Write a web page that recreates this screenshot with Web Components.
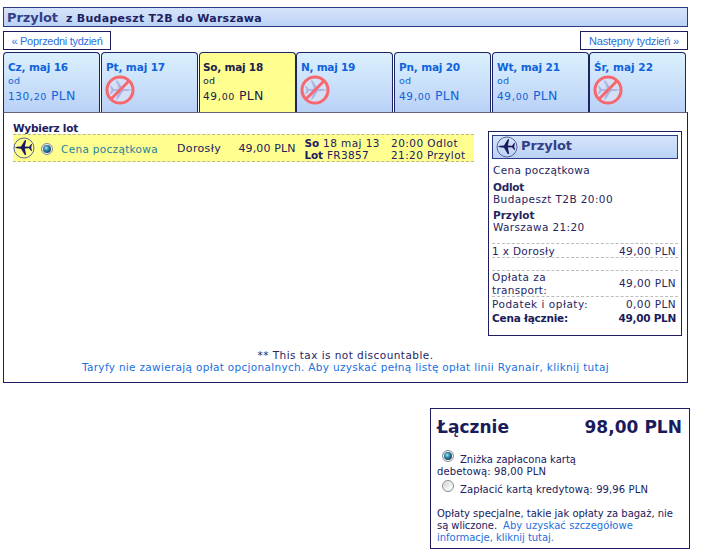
<!DOCTYPE html>
<html lang="pl">
<head>
<meta charset="utf-8">
<title>Wybierz lot</title>
<style>
  body {
    margin: 0;
    width: 703px;
    height: 557px;
    overflow: hidden;
    background: #fff;
    color: #20205e;
    font: 10.5px/12px Verdana, "DejaVu Sans", sans-serif;
  }
</style>
</head>
<body>
<booking-page></booking-page>

<script>
// Single line of text tracked out (or in) to a given width
class FitText extends HTMLElement {
  constructor() {
    super()
    this.attachShadow({ mode: 'open' })
    this.shadowRoot.innerHTML = `
      <style>
        :host { display: inline-block; width: max-content; white-space: nowrap; }
        :host([bold]) { font-weight: bold; }
      </style>
      <slot></slot>
    `
  }

  connectedCallback() {
    queueMicrotask(() => this.fit())
  }

  fit() {
    const w = Number(this.getAttribute('w'))
    const n = this.textContent.length
    if (!w || !n) return
    this.style.letterSpacing = `${(w - this.getBoundingClientRect().width) / n}px`
    this.style.width = `${w}px`
  }
}

class PlaneIcon extends HTMLElement {
  constructor() {
    super()
    this.attachShadow({ mode: 'open' })
    this.shadowRoot.innerHTML = `
      <style>
        :host { display: block; width: 22px; height: 22px; flex: none; }
        svg { display: block; }
      </style>
      <svg width="22" height="22" viewBox="0 0 22 22">
        <circle cx="11" cy="11" r="10" fill="none" stroke="#4a5390" stroke-width=".9"/>
        <path fill="#1b1b5c" d="M2 10.5 Q3.2 9.5 8 9.4 L11.8 3.2 L13.2 3.2 L11.9 9.5 L16 9.8 L18.2 7 L19 7 L18.2 10.5 L19 14 L18.2 14 L16 11.3 L11.9 11.6 L13.2 17.9 L11.8 17.9 L8 11.7 Q3.2 11.6 2 10.5z"/>
      </svg>
    `
  }
}

class NoFlightIcon extends HTMLElement {
  constructor() {
    super()
    this.attachShadow({ mode: 'open' })
    this.shadowRoot.innerHTML = `
      <style>
        :host { display: block; width: 30px; height: 30px; }
        svg { display: block; }
      </style>
      <svg width="30" height="30" viewBox="0 0 30 30">
        <circle cx="15" cy="15" r="13" fill="#d3e1f8"/>
        <path fill="#abb4e2" d="M26.5 15 Q25 14 18 13.8 L12.5 5.5 L10.8 5.5 L14 13.8 L9 14.2 L6.5 11 L5 11 L6.5 15 L5 19 L6.5 19 L9 15.8 L14 16.2 L10.8 24.5 L12.5 24.5 L18 16.2 Q25 16 26.5 15z"/>
        <circle cx="15" cy="15" r="13" fill="none" stroke="#f7686e" stroke-width="3"/>
        <path d="M5.8 24.2 L24.2 5.8" stroke="#f7686e" stroke-width="3"/>
      </svg>
    `
  }
}

class RadioDot extends HTMLElement {
  constructor() {
    super()
    this.attachShadow({ mode: 'open' })
    this.shadowRoot.innerHTML = `
      <style>
        :host {
          display: grid;
          place-items: center;
          box-sizing: border-box;
          width: 12px;
          height: 12px;
          flex: none;
          border: 1px solid #858b8f;
          border-radius: 50%;
          background: linear-gradient(135deg, #c5c9cc, #f8f8f8 70%);
          box-shadow: inset 0 0 0 1px #f4f4f4;
        }
        i { display: none; width: 8px; height: 8px; border-radius: 50%; background: radial-gradient(circle at 40% 38%, #a8e4f4 0, #2f81a5 38%, #12384f 80%); }
        :host([checked]) i { display: block; }
      </style>
      <i></i>
    `
  }
}

class TitleBar extends HTMLElement {
  constructor() {
    super()
    this.attachShadow({ mode: 'open' })
    this.shadowRoot.innerHTML = `
      <style>
        :host {
          display: flex;
          box-sizing: border-box;
          border: 1px solid #2b3a82;
          background: linear-gradient(#d5e4fa, #cbdcf8 45%, #bad2f6);
        }
      </style>
      <slot></slot>
    `
  }
}

class WeekButton extends HTMLElement {
  constructor() {
    super()
    this.attachShadow({ mode: 'open' })
    this.shadowRoot.innerHTML = `
      <style>
        :host {
          display: flex;
          justify-content: center;
          box-sizing: border-box;
          width: 108px;
          height: 19px;
          border: 1px solid #1d1d5f;
          color: #2a6fdc;
          font: 11px/19px "Liberation Sans", Arial, sans-serif;
        }
      </style>
      <slot></slot>
    `
  }
}

class DayTab extends HTMLElement {
  connectedCallback() {
    if (this.shadowRoot) return
    this.attachShadow({ mode: 'open' })
    const whole = this.getAttribute('whole')
    const body = whole
      ? `<div class="from"><fit-text w="12">od</fit-text></div>
         <div class="price"><fit-text w="${this.getAttribute('price-w')}">${whole},<small>${this.getAttribute('cents')}</small></fit-text><fit-text class="cur" w="24.5">PLN</fit-text></div>`
      : '<no-flight-icon></no-flight-icon>'
    this.shadowRoot.innerHTML = `
      <style>
        :host {
          display: block;
          box-sizing: border-box;
          width: 97px;
          height: 60px;
          padding: 8px 0 0 4px;
          border: 1px solid #1d2464;
          border-bottom: 0;
          border-radius: 4px 4px 0 0;
          background: linear-gradient(#daf0fd, #cbe1fa 50%, #b9d1f6);
          color: #0f63dc;
        }
        :host([selected]) { padding-left: 3px; background: #ffff90; color: #20204e; }
        .from { font-size: 9.5px; height: 14px; line-height: 15px; }
        .price { display: flex; gap: 4px; align-items: baseline; font-size: 10.5px; line-height: 18px; }
        .cur { font-size: 12.5px; }
        small { font-size: 9.5px; }
        no-flight-icon { margin: 2px 0 0 -1px; }
      </style>
      <fit-text bold w="${this.getAttribute('w')}">${this.getAttribute('day')}</fit-text>
      ${body}
    `
  }
}

class FlightRow extends HTMLElement {
  constructor() {
    super()
    this.attachShadow({ mode: 'open' })
    this.shadowRoot.innerHTML = `
      <style>
        :host {
          display: flex;
          align-items: center;
          box-sizing: border-box;
          width: 461px;
          height: 28px;
          background: #ffff90;
          border: dashed #b9b98a;
          border-width: 1px 0;
        }
        radio-dot { margin: 2px 8px 0 6px; }
        .fare { color: #267f9e; width: 116px; padding-top: 1px; }
        .who { width: 61.5px; font-size: 11px; padding-top: 1px; }
        .sum { width: 66px; font-size: 11px; padding-top: 1px; }
        .date { width: 86.5px; }
        .line { display: flex; gap: 4px; }
        .times, .date { padding-top: 1px; line-height: 12px; }
      </style>
      <plane-icon></plane-icon>
      <radio-dot checked></radio-dot>
      <div class="fare"><fit-text w="97">Cena początkowa</fit-text></div>
      <div class="who"><fit-text w="44">Dorosły</fit-text></div>
      <div class="sum"><fit-text w="57">49,00 PLN</fit-text></div>
      <div class="date">
        <div class="line"><fit-text bold w="14.5">So</fit-text><fit-text w="57">18 maj 13</fit-text></div>
        <div class="line"><fit-text bold w="18.5">Lot</fit-text><fit-text w="42">FR3857</fit-text></div>
      </div>
      <div class="times">
        <div><fit-text w="67">20:00 Odlot</fit-text></div>
        <div><fit-text w="74.5">21:20 Przylot</fit-text></div>
      </div>
    `
  }
}

class FlightSummary extends HTMLElement {
  constructor() {
    super()
    this.attachShadow({ mode: 'open' })
    this.shadowRoot.innerHTML = `
      <style>
        :host {
          display: block;
          box-sizing: border-box;
          width: 194px;
          height: 205px;
          padding: 3px;
          border: 1px solid #1d1d5f;
          color: #26265f;
        }
        title-bar { height: 24px; padding-left: 3px; gap: 3px; color: #333f86; font-size: 13px; line-height: 20px; }
        p { margin: 0 0 0 1px; }
        p fit-text { display: block; }
        .fare { padding-top: 5px; }
        .leg { padding-top: 5px; }
        .leg + .leg { padding-top: 4px; }
        .row {
          display: flex;
          justify-content: space-between;
          align-items: center;
          box-sizing: border-box;
          padding-right: 2px;
          border-top: 1px dashed #bdbdbd;
        }
        .row fit-text { display: block; }
        .plain { border-top: 0; }
        .first { margin-top: 10px; height: 14px; }
        .gap { height: 13px; }
        .fee { height: 26px; line-height: 13px; }
        .tax { height: 15px; }
        .total { height: 14px; color: #1b1b5c; }
      </style>
      <title-bar><plane-icon></plane-icon><fit-text bold w="51">Przylot</fit-text></title-bar>
      <p class="fare"><fit-text w="97">Cena początkowa</fit-text></p>
      <p class="leg"><fit-text bold w="31">Odlot</fit-text><fit-text w="120">Budapeszt T2B 20:00</fit-text></p>
      <p class="leg"><fit-text bold w="41.5">Przylot</fit-text><fit-text w="91.5">Warszawa 21:20</fit-text></p>
      <div class="row first"><fit-text w="63">1 x Dorosły</fit-text><fit-text w="57">49,00 PLN</fit-text></div>
      <div class="row gap"></div>
      <div class="row fee"><div><fit-text w="54">Opłata za</fit-text><fit-text w="55">transport:</fit-text></div><fit-text w="57">49,00 PLN</fit-text></div>
      <div class="row tax"><fit-text w="96">Podatek i opłaty:</fit-text><fit-text w="50">0,00 PLN</fit-text></div>
      <div class="row plain total"><fit-text bold w="76">Cena łącznie:</fit-text><fit-text bold w="57.5">49,00 PLN</fit-text></div>
    `
  }
}

class PaymentTotal extends HTMLElement {
  constructor() {
    super()
    this.attachShadow({ mode: 'open' })
    this.shadowRoot.innerHTML = `
      <style>
        :host {
          display: block;
          box-sizing: border-box;
          width: 260px;
          height: 141px;
          padding: 7px 7px 0 6px;
          border: 1px solid #1d1d5f;
          font-size: 10px;
        }
        .head { display: flex; justify-content: space-between; color: #1b1b5c; font-size: 17px; line-height: 22px; }
        .opt { display: flex; gap: 6px; padding-left: 5px; }
        .opt fit-text { margin-top: 4px; }
        .debit { padding-top: 12px; }
        .line { display: block; }
        .credit { padding-top: 2px; }
        .note { margin: 0; padding-top: 12px; }
        .pair { display: flex; gap: 6px; }
        .link { color: #1e6fdc; }
      </style>
      <div class="head"><fit-text bold w="72">Łącznie</fit-text><fit-text bold w="97.5">98,00 PLN</fit-text></div>
      <div class="opt debit"><radio-dot checked></radio-dot><fit-text w="116">Zniżka zapłacona kartą</fit-text></div>
      <fit-text class="line" w="109">debetową: 98,00 PLN</fit-text>
      <div class="opt credit"><radio-dot></radio-dot><fit-text w="188">Zapłacić kartą kredytową: 99,96 PLN</fit-text></div>
      <div class="note">
        <fit-text class="line" w="236">Opłaty specjalne, takie jak opłaty za bagaż, nie</fit-text>
        <div class="pair"><fit-text w="60">są wliczone.</fit-text><fit-text class="link" w="130">Aby uzyskać szczegółowe</fit-text></div>
        <fit-text class="line link" w="117">informacje, kliknij tutaj.</fit-text>
      </div>
    `
  }
}

class BookingPage extends HTMLElement {
  constructor() {
    super()
    this.attachShadow({ mode: 'open' })
    this.shadowRoot.innerHTML = `
      <style>
        :host { display: block; width: 687px; padding: 7px 0 0 3px; }
        .bar { width: 685px; height: 20px; padding-left: 3px; gap: 8px; align-items: baseline; line-height: 19px; }
        .bar .name { font-size: 13px; color: #333f86; }
        .bar .route { font-size: 11px; }
        .weeks { display: flex; justify-content: space-between; width: 685px; padding: 4px 0 2px; }
        .tabs { display: flex; }
        .tabs day-tab + day-tab { margin-left: 1px; }
        .tabs day-tab:nth-child(3n + 4) { margin-left: 0; }
        .panel {
          box-sizing: border-box;
          width: 685px;
          height: 271px;
          padding: 9px 5px 0 9px;
          border: 1px solid #1d1d5f;
          border-top-color: #62647c;
        }
        .cols { display: flex; justify-content: space-between; }
        .pick { display: block; height: 12px; }
        flight-summary { margin-top: 9px; }
        .notes { display: flex; flex-direction: column; align-items: center; padding: 13px 4px 0 0; color: #26265f; }
        .link { color: #2070de; }
        payment-total { margin: 25px 0 0 427px; }
      </style>
      <title-bar class="bar">
        <fit-text class="name" bold w="51">Przylot</fit-text>
        <fit-text class="route" bold w="196">z Budapeszt T2B do Warszawa</fit-text>
      </title-bar>
      <div class="weeks">
        <week-button><fit-text w="91">« Poprzedni tydzień</fit-text></week-button>
        <week-button><fit-text w="90">Następny tydzień »</fit-text></week-button>
      </div>
      <div class="tabs">
        <day-tab day="Cz, maj 16" w="60" whole="130" cents="20" price-w="39"></day-tab>
        <day-tab day="Pt, maj 17" w="59"></day-tab>
        <day-tab day="So, maj 18" w="60" whole="49" cents="00" price-w="32" selected></day-tab>
        <day-tab day="N, maj 19" w="54"></day-tab>
        <day-tab day="Pn, maj 20" w="61" whole="49" cents="00" price-w="32"></day-tab>
        <day-tab day="Wt, maj 21" w="63" whole="49" cents="00" price-w="32"></day-tab>
        <day-tab day="Śr, maj 22" w="59"></day-tab>
      </div>
      <div class="panel">
        <div class="cols">
          <div>
            <fit-text class="pick" bold w="65">Wybierz lot</fit-text>
            <flight-row></flight-row>
          </div>
          <flight-summary></flight-summary>
        </div>
        <div class="notes">
          <fit-text w="176">** This tax is not discountable.</fit-text>
          <fit-text class="link" w="527">Taryfy nie zawierają opłat opcjonalnych. Aby uzyskać pełną listę opłat linii Ryanair, kliknij tutaj</fit-text>
        </div>
      </div>
      <payment-total></payment-total>
    `
  }
}

customElements.define('fit-text', FitText)
customElements.define('plane-icon', PlaneIcon)
customElements.define('no-flight-icon', NoFlightIcon)
customElements.define('radio-dot', RadioDot)
customElements.define('title-bar', TitleBar)
customElements.define('week-button', WeekButton)
customElements.define('day-tab', DayTab)
customElements.define('flight-row', FlightRow)
customElements.define('flight-summary', FlightSummary)
customElements.define('payment-total', PaymentTotal)
customElements.define('booking-page', BookingPage)
</script>
</body>
</html>
